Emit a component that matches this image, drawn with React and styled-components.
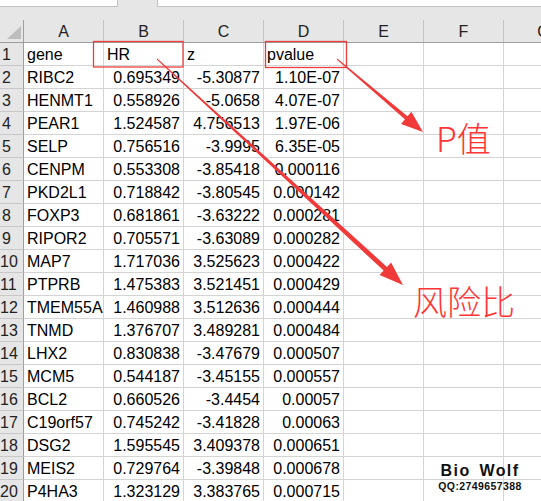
import React from 'react'
import styled, { createGlobalStyle } from 'styled-components'

const GlobalStyle= createGlobalStyle`
  html, body {
    margin: 0;
    padding: 0;
    overflow: hidden;
    background: #ffffff;
  }
  body {
    font-family: "Liberation Sans", Arial, sans-serif;
  }
`

const Page= styled.div`
  position: relative;
  width: 541px;
  height: 501px;
  overflow: hidden;
  background: #ffffff;
`

const TopBar= styled.div`
  display: flex;
  align-items: flex-start;
  height: 20px;
  background: #e6e6e6;
`

const InputBox= styled.div`
  flex: none;
  box-sizing: border-box;
  width: ${p=> p.$width}px;
  margin-left: ${p=> p.$gap || 0}px;
  height: 7px;
  background: #ffffff;
  border-bottom: 1px solid #c3c3c3;
  border-left: ${p=> p.$gap ? '1px solid #c3c3c3' : 'none'};
  border-right: ${p=> p.$gap ? 'none' : '1px solid #c3c3c3'};
`

const Sheet= styled.div`
  display: flex;
  flex-direction: column;
  width: 584px;
`

const HeaderRow= styled.div`
  display: flex;
  height: 23px;
  box-sizing: border-box;
  background: #e6e6e6;
  border-bottom: 1px solid #9e9e9e;
`

const Corner= styled.div`
  position: relative;
  flex: none;
  box-sizing: border-box;
  width: 24px;
  border-right: 1px solid #9e9e9e;

  &::after {
    content: '';
    position: absolute;
    right: 2px;
    bottom: 3px;
    width: 0;
    height: 0;
    border-style: solid;
    border-width: 0 0 13px 14px;
    border-color: transparent transparent #bdbdbd transparent;
  }
`

const ColHeader= styled.div`
  flex: none;
  box-sizing: border-box;
  width: 80px;
  display: flex;
  align-items: flex-end;
  justify-content: center;
  padding-bottom: 1px;
  border-right: 1px solid #c4c4c4;
  font-size: 16px;
  line-height: 18px;
  color: #222222;
`

const Row= styled.div`
  display: flex;
  height: 23px;
`

const RowHeader= styled.div`
  flex: none;
  box-sizing: border-box;
  width: 24px;
  display: flex;
  align-items: flex-end;
  padding-bottom: 1px;
  background: #e6e6e6;
  border-right: 1px solid #9e9e9e;
  border-bottom: 1px solid #c8c8c8;
  font-size: 16px;
  line-height: 18px;
  color: #222222;
`

const RowNum= styled.span`
  display: block;
  width: 13px;
  text-align: center;
  white-space: nowrap;
`

const Cell= styled.div`
  flex: none;
  box-sizing: border-box;
  width: 80px;
  display: flex;
  align-items: flex-end;
  justify-content: ${p=> p.$right ? 'flex-end' : 'flex-start'};
  padding: 0 3px 1px 3px;
  overflow: hidden;
  white-space: nowrap;
  border-right: 1px solid #d4d4d4;
  border-bottom: 1px solid #d4d4d4;
  font-size: 16px;
  line-height: 18px;
  color: #000000;
`

const Overlay= styled.svg`
  position: absolute;
  left: 0;
  top: 0;
  width: 541px;
  height: 501px;
  pointer-events: none;
`

const Note= styled.div`
  position: absolute;
  left: ${p=> p.$x}px;
  top: ${p=> p.$y}px;
  font-family: "Noto Sans CJK SC", "Liberation Sans", sans-serif;
  font-weight: 300;
  font-size: 34px;
  line-height: 34px;
  color: #ff3434;
  white-space: nowrap;
`

const Stamp= styled.div`
  position: absolute;
  left: 420px;
  top: 461px;
  width: 120px;
  display: flex;
  flex-direction: column;
  align-items: center;
  color: #111111;
  font-family: "Liberation Sans", Arial, sans-serif;
  font-weight: bold;
`

const StampTitle= styled.span`
  font-size: 16px;
  line-height: 19px;
  letter-spacing: 1.4px;
  word-spacing: 3px;
`

const StampSub= styled.span`
  font-size: 10.5px;
  line-height: 12px;
  letter-spacing: 0.4px;
`

const columns= ['A', 'B', 'C', 'D', 'E', 'F', 'G']

const rows= [
  ['gene', 'HR', 'z', 'pvalue'],
  ['RIBC2', '0.695349', '-5.30877', '1.10E-07'],
  ['HENMT1', '0.558926', '-5.0658', '4.07E-07'],
  ['PEAR1', '1.524587', '4.756513', '1.97E-06'],
  ['SELP', '0.756516', '-3.9995', '6.35E-05'],
  ['CENPM', '0.553308', '-3.85418', '0.000116'],
  ['PKD2L1', '0.718842', '-3.80545', '0.000142'],
  ['FOXP3', '0.681861', '-3.63222', '0.000281'],
  ['RIPOR2', '0.705571', '-3.63089', '0.000282'],
  ['MAP7', '1.717036', '3.525623', '0.000422'],
  ['PTPRB', '1.475383', '3.521451', '0.000429'],
  ['TMEM55A', '1.460988', '3.512636', '0.000444'],
  ['TNMD', '1.376707', '3.489281', '0.000484'],
  ['LHX2', '0.830838', '-3.47679', '0.000507'],
  ['MCM5', '0.544187', '-3.45155', '0.000557'],
  ['BCL2', '0.660526', '-3.4454', '0.00057'],
  ['C19orf57', '0.745242', '-3.41828', '0.00063'],
  ['DSG2', '1.595545', '3.409378', '0.000651'],
  ['MEIS2', '0.729764', '-3.39848', '0.000678'],
  ['P4HA3', '1.323129', '3.383765', '0.000715'],
]

// tapered arrow like the screenshot tool draws
function arrowPoints(x0, y0, x1, y1, w0, w1, headLen, headHalf) {
  const dx= x1 - x0
  const dy= y1 - y0
  const len= Math.hypot(dx, dy)
  const ux= dx / len
  const uy= dy / len
  const nx= -uy
  const ny= ux
  const bx= x1 - ux * headLen
  const by= y1 - uy * headLen
  const pts= [
    [x0 + nx * w0 / 2, y0 + ny * w0 / 2],
    [bx + nx * w1 / 2, by + ny * w1 / 2],
    [bx + nx * headHalf, by + ny * headHalf],
    [x1, y1],
    [bx - nx * headHalf, by - ny * headHalf],
    [bx - nx * w1 / 2, by - ny * w1 / 2],
    [x0 - nx * w0 / 2, y0 - ny * w0 / 2],
  ]
  return pts.map(p=> p.map(v=> v.toFixed(1)).join(',')).join(' ')
}

export default function App() {
  return (
    <Page>
      <GlobalStyle />
      <TopBar>
        <InputBox $width={118} />
        <InputBox $width={400} $gap={39} />
      </TopBar>
      <Sheet>
        <HeaderRow>
          <Corner />
          { columns.map(c=> <ColHeader key={c}>{c}</ColHeader>) }
        </HeaderRow>
        { rows.map((r, i)=> (
          <Row key={i}>
            <RowHeader><RowNum>{i + 1}</RowNum></RowHeader>
            { columns.map((c, j)=> (
              <Cell key={c} $right={i > 0 && j > 0}>
                {r[j] || ''}
              </Cell>
            ))}
          </Row>
        ))}
      </Sheet>

      <Overlay viewBox='0 0 541 501'>
        <rect x='93.5' y='41.5' width='89.5' height='25.5' fill='none' stroke='#ea3f3f' strokeWidth='1.3' />
        <rect x='265.5' y='41.5' width='81' height='26' fill='none' stroke='#ea3f3f' strokeWidth='1.3' />
        <polygon fill='#f03a3a' points={arrowPoints(337, 59, 423, 132, 1, 4, 22, 8)} />
        <polygon fill='#f03a3a' points={arrowPoints(157, 59, 403, 285, 1, 5, 24, 8.5)} />
      </Overlay>

      <Note $x={436} $y={121}>P值</Note>
      <Note $x={413} $y={284}>风险比</Note>

      <Stamp>
        <StampTitle>Bio Wolf</StampTitle>
        <StampSub>QQ:2749657388</StampSub>
      </Stamp>
    </Page>
  )
}
